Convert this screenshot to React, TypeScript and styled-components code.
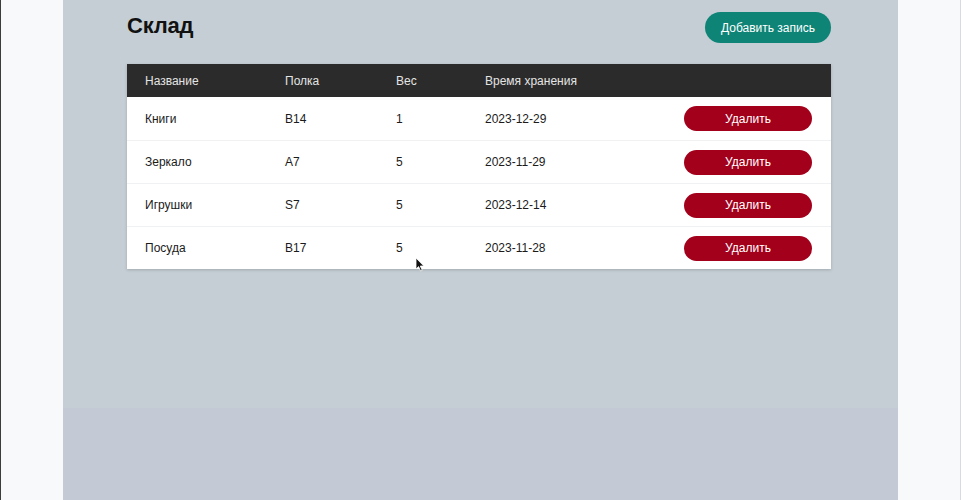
import React from "react";
import styled, { createGlobalStyle } from "styled-components";

const Global = createGlobalStyle`
  html, body { margin: 0; padding: 0; }
  body {
    background: #f8f9fb;
    font-family: "Liberation Sans", Arial, Helvetica, sans-serif;
    overflow: hidden;
  }
`;

const Frame = styled.div`
  height: 500px;
  display: flex;
  justify-content: flex-start;
  border-left: 1px solid #3c3c3c;
  border-right: 1px solid #d8dade;
  box-sizing: border-box;
  padding-left: 62px;
  padding-right: 63px;
`;

const Panel = styled.main`
  flex: 1;
  background: linear-gradient(#c4ced4 0, #c4ced4 408px, #c3c9d5 408px);
  padding: 12px 67px 0 64px;
  box-sizing: border-box;
  position: relative;
`;

const Header = styled.header`
  display: flex;
  align-items: flex-start;
  justify-content: space-between;
  height: 52px;
`;

const Title = styled.h1`
  margin: 0;
  padding-top: 1px;
  font-size: 22px;
  font-weight: 700;
  color: #111;
  letter-spacing: -0.2px;
`;

const AddButton = styled.button`
  height: 31px;
  width: 126px;
  border: none;
  border-radius: 16px;
  background: #0e8476;
  color: #ffffff;
  font-family: inherit;
  font-size: 12px;
  padding: 0;
  cursor: pointer;
`;

const Table = styled.div`
  background: #ffffff;
  box-shadow: 0 1px 3px rgba(0, 0, 0, 0.18);
  width: 704px;
`;

const Row = styled.div<{ $head?: boolean }>`
  display: grid;
  grid-template-columns: 140px 111px 89px 1fr 128px;
  align-items: center;
  padding: 0 19px 0 18px;
  height: ${(p) => (p.$head ? "33px" : "43px")};
  background: ${(p) => (p.$head ? "#2b2b2b" : "#ffffff")};
  color: ${(p) => (p.$head ? "#e4e4e4" : "#1b1b1b")};
  font-size: 12px;
  border-top: ${(p) => (p.$head ? "none" : "1px solid #f0f1f2")};
  box-sizing: border-box;
  &:nth-child(2) { border-top: none; }
`;

const Cell = styled.span``;

const DeleteButton = styled.button`
  height: 25px;
  width: 128px;
  border: none;
  border-radius: 13px;
  background: #a2001b;
  color: #ffffff;
  font-family: inherit;
  font-size: 12px;
  padding: 0;
  cursor: pointer;
`;

const Cursor = styled.svg`
  position: absolute;
  left: 352px;
  top: 257px;
`;

const rows = [
  { name: "Книги", shelf: "B14", weight: "1", date: "2023-12-29" },
  { name: "Зеркало", shelf: "A7", weight: "5", date: "2023-11-29" },
  { name: "Игрушки", shelf: "S7", weight: "5", date: "2023-12-14" },
  { name: "Посуда", shelf: "B17", weight: "5", date: "2023-11-28" },
];

export default function App() {
  return (
    <>
      <Global />
      <Frame>
        <Panel>
          <Header>
            <Title>Склад</Title>
            <AddButton>Добавить запись</AddButton>
          </Header>
          <Table>
            <Row $head>
              <Cell>Название</Cell>
              <Cell>Полка</Cell>
              <Cell>Вес</Cell>
              <Cell>Время хранения</Cell>
              <Cell />
            </Row>
            {rows.map((r) => (
              <Row key={r.name}>
                <Cell>{r.name}</Cell>
                <Cell>{r.shelf}</Cell>
                <Cell>{r.weight}</Cell>
                <Cell>{r.date}</Cell>
                <DeleteButton>Удалить</DeleteButton>
              </Row>
            ))}
          </Table>
          <Cursor width="10" height="15" viewBox="0 0 10 15">
            <path d="M1 1 L1 12 L3.6 9.6 L5.6 14 L7.2 13.3 L5.3 9 L8.8 9 Z" fill="#111" stroke="#fff" strokeWidth="0.8" />
          </Cursor>
        </Panel>
      </Frame>
    </>
  );
}
